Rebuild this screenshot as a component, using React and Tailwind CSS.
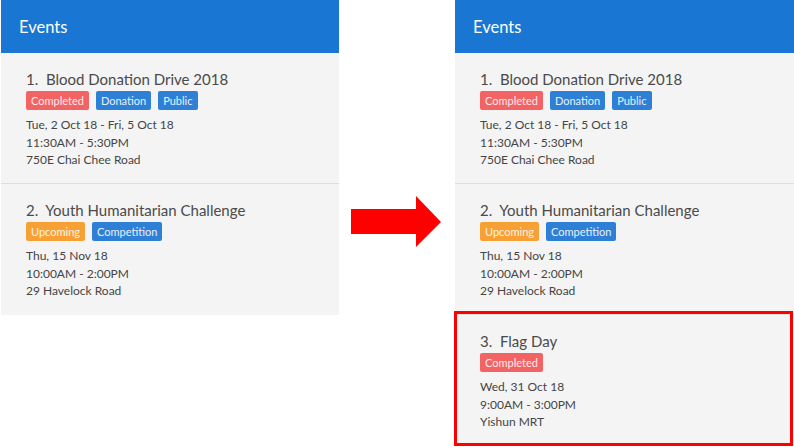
const EVENTS = [
  {
    n: 1,
    name: 'Blood Donation Drive 2018',
    tags: [
      { label: 'Completed', kind: 'red' },
      { label: 'Donation', kind: 'blue' },
      { label: 'Public', kind: 'blue' },
    ],
    date: 'Tue, 2 Oct 18 - Fri, 5 Oct 18',
    time: '11:30AM - 5:30PM',
    place: '750E Chai Chee Road',
  },
  {
    n: 2,
    name: 'Youth Humanitarian Challenge',
    tags: [
      { label: 'Upcoming', kind: 'orange' },
      { label: 'Competition', kind: 'blue' },
    ],
    date: 'Thu, 15 Nov 18',
    time: '10:00AM - 2:00PM',
    place: '29 Havelock Road',
  },
  {
    n: 3,
    name: 'Flag Day',
    tags: [{ label: 'Completed', kind: 'red' }],
    date: 'Wed, 31 Oct 18',
    time: '9:00AM - 3:00PM',
    place: 'Yishun MRT',
  },
]

const TAG = {
  red: 'bg-[#f26464] text-[#fde8e8]',
  blue: 'bg-[#2e80d6] text-[#e6f0fb]',
  orange: 'bg-[#f7a034] text-[#fff4e4]',
}

function Tag({ label, kind }) {
  return (
    <span className={`rounded-[2px] px-[5px] h-[19px] leading-[19px] text-[11px] ${TAG[kind]}`}>
      {label}
    </span>
  )
}

function EventCard({ ev, last }) {
  return (
    <div className={`h-[131px] pl-[25px] pt-[16px] ${last ? '' : 'border-b-[1.5px] border-[#dedede]'}`}>
      <div className="text-[15px] leading-[20px] text-[#4a4a4a]">
        {ev.n}.&nbsp;&nbsp;{ev.name}
      </div>
      <div className="mt-[2px] flex gap-[7px]">
        {ev.tags.map((t) => (
          <Tag key={t.label} {...t} />
        ))}
      </div>
      <div className="mt-[6px] text-[12px] leading-[17.5px] text-[#454545]">
        <div>{ev.date}</div>
        <div>{ev.time}</div>
        <div>{ev.place}</div>
      </div>
    </div>
  )
}

function Panel({ events, children }) {
  return (
    <div className="relative w-[339px] shrink-0 bg-[#f4f4f4]">
      <div className="h-[53px] bg-[#1976d2] pl-[18px] pt-[15px] text-[16.5px] leading-[24px] text-white">Events</div>
      {events.map((ev, i) => (
        <EventCard key={ev.n} ev={ev} last={i === events.length - 1} />
      ))}
      {children}
    </div>
  )
}

export default function App() {
  return (
    <div
      className="flex h-[448px] w-[794px] items-start bg-white"
      style={{ fontFamily: 'Lato, "Open Sans", sans-serif' }}
    >
      <div className="ml-px w-[338px] shrink-0 overflow-hidden">
        <Panel events={EVENTS.slice(0, 2)} />
      </div>
      <div className="flex w-[116px] shrink-0 items-start pt-[196px] pl-[12px]">
        <svg width="90" height="52" viewBox="0 0 90 52">
          <path d="M0 13 H65 V0 L90 26 L65 51 V38 H0 Z" fill="#ff0000" />
        </svg>
      </div>
      <Panel events={EVENTS}>
        <div className="pointer-events-none absolute left-[-1px] top-[311px] h-[135px] w-[339px] border-[3px] border-[#ff0000]" />
      </Panel>
    </div>
  )
}
